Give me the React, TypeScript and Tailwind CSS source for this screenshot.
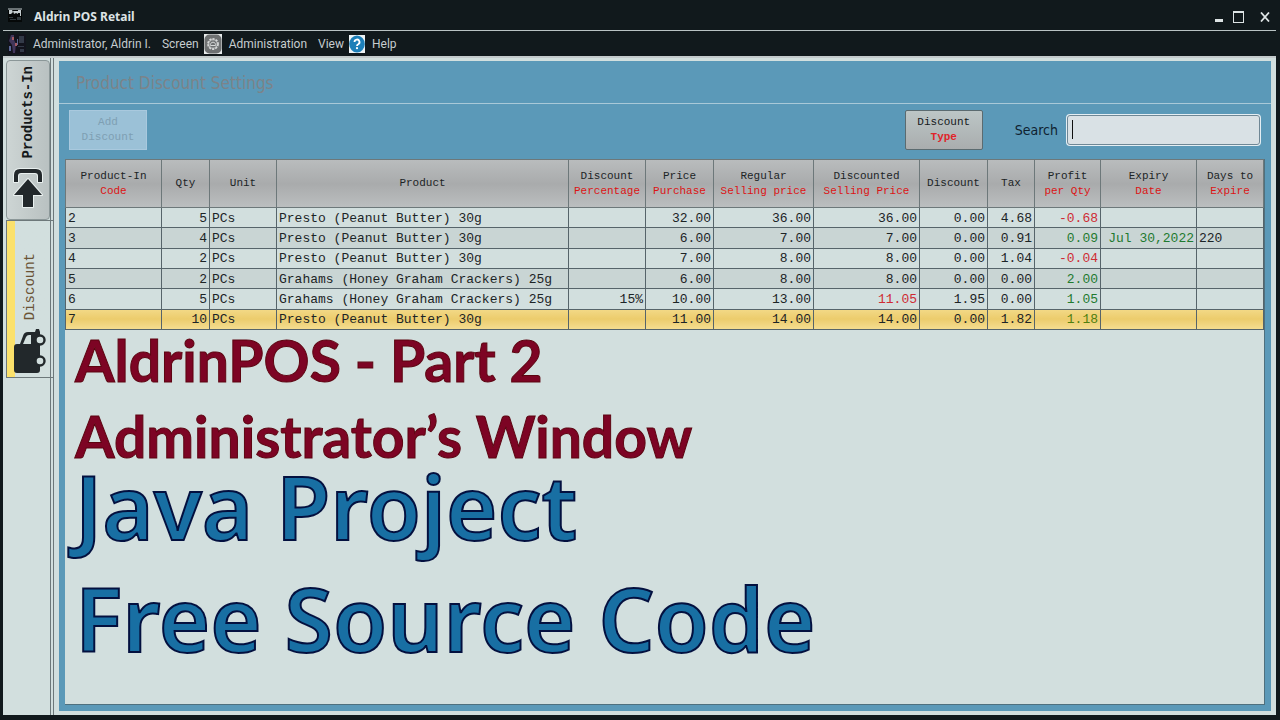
import { ReactNode } from "react";

type Row = {
  code: string;
  qty: string;
  product: string;
  percent?: string;
  price: string;
  regular: string;
  discounted: string;
  discount: string;
  tax: string;
  profit: string;
  expiry?: string;
  days?: string;
};

const presto = "Presto (Peanut Butter) 30g";
const grahams = "Grahams (Honey Graham Crackers) 25g";

const rows: Row[] = [
  { code: "2", qty: "5", product: presto, price: "32.00", regular: "36.00", discounted: "36.00", discount: "0.00", tax: "4.68", profit: "-0.68" },
  { code: "3", qty: "4", product: presto, price: "6.00", regular: "7.00", discounted: "7.00", discount: "0.00", tax: "0.91", profit: "0.09", expiry: "Jul 30,2022", days: "220" },
  { code: "4", qty: "2", product: presto, price: "7.00", regular: "8.00", discounted: "8.00", discount: "0.00", tax: "1.04", profit: "-0.04" },
  { code: "5", qty: "2", product: grahams, price: "6.00", regular: "8.00", discounted: "8.00", discount: "0.00", tax: "0.00", profit: "2.00" },
  { code: "6", qty: "5", product: grahams, percent: "15%", price: "10.00", regular: "13.00", discounted: "11.05", discount: "1.95", tax: "0.00", profit: "1.05" },
  { code: "7", qty: "10", product: presto, price: "11.00", regular: "14.00", discounted: "14.00", discount: "0.00", tax: "1.82", profit: "1.18" },
];

const columns: [string, string, string][] = [
  ["Product-In", "Code", "w-[96px]"],
  ["Qty", "", "w-[48px]"],
  ["Unit", "", "w-[67px]"],
  ["Product", "", ""],
  ["Discount", "Percentage", "w-[77px]"],
  ["Price", "Purchase", "w-[68px]"],
  ["Regular", "Selling price", "w-[100px]"],
  ["Discounted", "Selling Price", "w-[106px]"],
  ["Discount", "", "w-[68px]"],
  ["Tax", "", "w-[47px]"],
  ["Profit", "per Qty", "w-[66px]"],
  ["Expiry", "Date", "w-[96px]"],
  ["Days to", "Expire", "w-[67px]"],
];

function Cell({ right, tone, children }: { right?: boolean; tone?: string; children?: ReactNode }) {
  return (
    <td className={`border border-[#56646a] px-[2px] pt-[2px] pb-0 ${right ? "text-right" : "text-left"} ${tone ?? ""}`}>
      {children}
    </td>
  );
}

function DiscountTable() {
  return (
    <table className="h-[171px] w-full table-fixed border-collapse font-['Liberation_Mono',monospace] text-[13px] leading-4 whitespace-nowrap text-[#1c2426]">
      <colgroup>
        {columns.map(([a, b, w]) => (
          <col key={a + b} className={w} />
        ))}
      </colgroup>
      <thead>
        <tr className="h-12 bg-linear-to-b from-[#b9bcbd] via-[#a9abac] to-[#bcbfc0] text-[11px] leading-[15px]">
          {columns.map(([a, b]) => (
            <th key={a + b} className="border border-[#6d787a] p-0 text-center font-normal">
              {a}
              {b && <span className="block text-[#dc1414]">{b}</span>}
            </th>
          ))}
        </tr>
      </thead>
      <tbody>
        {rows.map((r, i) => (
          <tr
            key={r.code}
            className={
              i === rows.length - 1
                ? "bg-linear-to-b from-[#f3da88] via-[#eccc6c] to-[#f5dd90]"
                : i % 2
                  ? "bg-[#c9d5d4]"
                  : "bg-[#d2dfde]"
            }
          >
            <Cell>{r.code}</Cell>
            <Cell right>{r.qty}</Cell>
            <Cell>PCs</Cell>
            <Cell>{r.product}</Cell>
            <Cell right>{r.percent}</Cell>
            <Cell right>{r.price}</Cell>
            <Cell right>{r.regular}</Cell>
            <Cell right tone={r.percent ? "text-[#cf2b33]" : ""}>{r.discounted}</Cell>
            <Cell right>{r.discount}</Cell>
            <Cell right>{r.tax}</Cell>
            <Cell right tone={r.profit.startsWith("-") ? "text-[#cf2b33]" : i === 5 ? "text-[#4f7f10]" : "text-[#1f7a30]"}>{r.profit}</Cell>
            <Cell right tone="text-[#1f7a30]">{r.expiry}</Cell>
            <Cell>{r.days}</Cell>
          </tr>
        ))}
      </tbody>
    </table>
  );
}

function UploadIcon() {
  return (
    <svg viewBox="0 0 34 44" className="h-11 w-[34px]" aria-hidden="true">
      <g stroke="#e9f0ef" strokeWidth="2" strokeLinejoin="round" paintOrder="stroke" fill="#22282b">
        <path d="M3 16V9q0-6 6-6h16q6 0 6 6v7h-4V10q0-3-3-3H10q-3 0-3 3v6z" />
        <path d="M17 13L31 29H22V41H12V29H3z" />
      </g>
    </svg>
  );
}

function TruckIcon() {
  return (
    <svg viewBox="0 0 32 46" className="h-[46px] w-8" aria-hidden="true">
      <path d="M0 19q0-3 3-3h3l3-8q1-4 5-4h7l1-3h3l1 3v38q0 3-3 3H3q-3 0-3-3z" fill="#22282b" />
      <path d="M9 16l3-7q1-2 3-2h2v9z" fill="#d2dfde" />
      <circle cx="26" cy="12" r="4.500" fill="#d2dfde" stroke="#22282b" strokeWidth="2.400" />
      <circle cx="26" cy="33" r="4.500" fill="#d2dfde" stroke="#22282b" strokeWidth="2.400" />
    </svg>
  );
}

function StoreIcon() {
  return (
    <svg viewBox="0 0 14 14" className="size-[14px]" aria-hidden="true">
      <rect width="14" height="14" fill="#050808" />
      <path d="M0 0h14v2H0z" fill="#6b7375" />
      <path d="M1 2h3l1 2-2 2H1zM5 3h5v3l-2-1-2 1zM10 2h3v6h-1V5h-2z" fill="#c3cbcd" />
      <path d="M1 9h4v1H1zM2 11h6v1H2zM9 9h4v3H9z" fill="#30393d" />
    </svg>
  );
}

function UserIcon() {
  return (
    <svg viewBox="0 0 18 20" className="h-5 w-[18px]" aria-hidden="true">
      <rect width="18" height="20" fill="#12131c" />
      <path d="M3 1h3v5l2 4-1 9H5L4 11 1 7z" fill="#41365a" />
      <path d="M4 3h2v3H4zM7 9h2v3H7z" fill="#a45a63" />
      <path d="M11 2h5v7h-5zM10 12h6v1h-6zM12 15h4v3h-4z" fill="#333a48" />
      <path d="M1 12h2v5H1zM9 5h1v6H9z" fill="#5a6796" />
    </svg>
  );
}

function GearIcon() {
  return (
    <svg viewBox="0 0 18 20" className="h-5 w-[18px]" aria-hidden="true">
      <rect width="18" height="20" fill="#e6eaea" />
      <rect x="0.500" y="0.500" width="17" height="19" rx="5" fill="#6e7172" />
      <circle cx="9" cy="10" r="5" fill="none" stroke="#d5d8d8" strokeWidth="1.800" strokeDasharray="2.200 1" />
      <circle cx="9" cy="10" r="4.200" fill="#6e7172" stroke="#d5d8d8" strokeWidth="0.800" />
      <path d="M6.500 11.500a2.600 2.600 0 1 1 5 0z" fill="none" stroke="#d5d8d8" strokeWidth="1" />
    </svg>
  );
}

function HelpIcon() {
  return (
    <svg viewBox="0 0 16 18" className="h-[18px] w-4" aria-hidden="true">
      <rect width="16" height="18" fill="#eef3f5" />
      <ellipse cx="8" cy="9" rx="7.800" ry="8.600" fill="#1c7fb8" />
      <path d="M5.500 7a2.500 2.500 0 1 1 3.700 2.200Q8 9.800 8 11" fill="none" stroke="#fff" strokeWidth="1.800" />
      <circle cx="8" cy="13.200" r="1.100" fill="#fff" />
    </svg>
  );
}

export default function App() {
  return (
    <div className="flex min-h-screen flex-col bg-[#11191c] pr-1 pb-[5px] pl-[3px] font-['Noto_Sans',sans-serif]">
      <header className="flex h-[30px] items-center pr-[6px] pl-[5px] text-[#dde3e4]">
        <StoreIcon />
        <h1 className="ml-3 flex-1 pt-1 text-xs font-bold">Aldrin POS Retail</h1>
        <div className="flex items-center gap-[10px] pt-1">
          <button aria-label="Minimize" className="flex h-[10px] w-[8px] items-end">
            <span className="h-[3px] w-full bg-[#dde3e4]" />
          </button>
          <button aria-label="Maximize" className="h-3 w-[11px] border border-t-2 border-[#dde3e4]" />
          <button aria-label="Close" className="ml-[6px]">
            <svg viewBox="0 0 10 10" className="size-[10px]" aria-hidden="true">
              <path d="M1 0.500L9 9.500M9 0.500L1 9.500" stroke="#dde3e4" strokeWidth="1.800" />
            </svg>
          </button>
        </div>
      </header>

      <nav className="flex h-[26px] items-center border-t border-[#b9c2c3] pl-[5px] font-['Roboto',sans-serif] text-xs text-[#c6cdcf]">
        <button className="flex items-center gap-[7px]">
          <UserIcon />
          Administrator, Aldrin I.
        </button>
        <button className="ml-[11px]">Screen</button>
        <button className="ml-[5px] flex items-center gap-[7px]">
          <GearIcon />
          Administration
        </button>
        <button className="ml-[11px]">View</button>
        <button className="ml-[5px] flex items-center gap-[7px]">
          <HelpIcon />
          Help
        </button>
      </nav>

      <div className="flex flex-1 border-t-2 border-[#c3cacb] bg-[#d2dfde]">
        <aside className="flex w-[47px] shrink-0 flex-col pt-[2px] pl-[3px] font-['Liberation_Mono',monospace] text-[14px] leading-4">
          <button className="flex h-[160px] flex-col items-center rounded-sm border border-[#8b9798] bg-linear-to-r from-[#cdd5d4] to-[#b9c1c1] pt-[5px] text-[#15191b]">
            <span className="rotate-180 font-bold [writing-mode:vertical-rl]">Products-In</span>
            <span className="mt-2"><UploadIcon /></span>
          </button>
          <button className="-mr-[3px] flex h-[158px] flex-col items-center border border-r-0 border-[#6d787a] bg-linear-to-r from-[#fbe16b] from-[8px] to-[#d2dfde] to-[8px] pt-8 text-[#6b5436]">
            <span className="rotate-180 [writing-mode:vertical-rl]">Discount</span>
            <span className="mt-2"><TruckIcon /></span>
          </button>
        </aside>
        <div className="w-1 shrink-0 border-x border-[#6d787a]" />

        <main className="flex min-w-0 flex-1 flex-col pt-[3px] pr-[5px] pb-[4px] pl-[5px]">
          <div className="flex flex-1 flex-col bg-[#5b99b8]">
            <h2 className="h-[43px] border-b border-[#a9c9d8] pt-[10px] pl-[17px] font-['DejaVu_Sans_Condensed','Noto_Sans',sans-serif] text-[17px] leading-6 text-[#7c8389]">
              Product Discount Settings
            </h2>
            <div className="flex items-center pt-[6px] pr-[10px] pl-[10px] font-['Liberation_Mono',monospace] text-[11px] leading-[15px]">
              <button disabled className="h-10 w-[78px] border border-[#a9c9de] bg-[#9bc1d7] text-[#7e9fb3]">
                Add<span className="block">Discount</span>
              </button>
              <button className="ml-auto h-10 w-[78px] rounded-xs border border-[#5b6b70] bg-linear-to-b from-[#bcc6c6] to-[#a9adae] text-[#15191b]">
                Discount<span className="block font-bold text-[#e0242a]">Type</span>
              </button>
              <label htmlFor="search" className="ml-8 font-['DejaVu_Sans_Condensed','Noto_Sans',sans-serif] text-[14px] text-[#0f2230]">
                Search
              </label>
              <div className="relative ml-2">
                <input
                  id="search"
                  className="block h-8 w-[195px] rounded-sm border-2 border-[#e4eef3] bg-[#d9e1e5] px-[5px] font-['Noto_Sans',sans-serif] text-sm text-[#101010] outline-1 -outline-offset-2 outline-[#6f8795]"
                />
                <span className="pointer-events-none absolute top-[6px] left-[6px] h-[19px] w-px bg-[#101010]" />
              </div>
            </div>
            <section className="mx-[6px] mt-[9px] mb-[6px] flex-1 border-r border-b border-[#4f707e] bg-[#d2dfde]">
              <DiscountTable />
              <div className="-mt-2 -mb-2 pl-[10px] whitespace-nowrap">
                <div className="font-['Lato',sans-serif] text-[57px] leading-[76px] font-bold text-[#7d0424] [-webkit-text-stroke:1px_#5c0410]">
                  <p>AldrinPOS - Part 2</p>
                  <p>Administrator’s Window</p>
                </div>
                <div className="-mt-6 text-[88px] leading-[112px] font-semibold text-[#186fa3] [-webkit-text-stroke:2px_#03103f]">
                  <p>Java Project</p>
                  <p>Free Source Code</p>
                </div>
              </div>
            </section>
          </div>
        </main>
      </div>
    </div>
  );
}
